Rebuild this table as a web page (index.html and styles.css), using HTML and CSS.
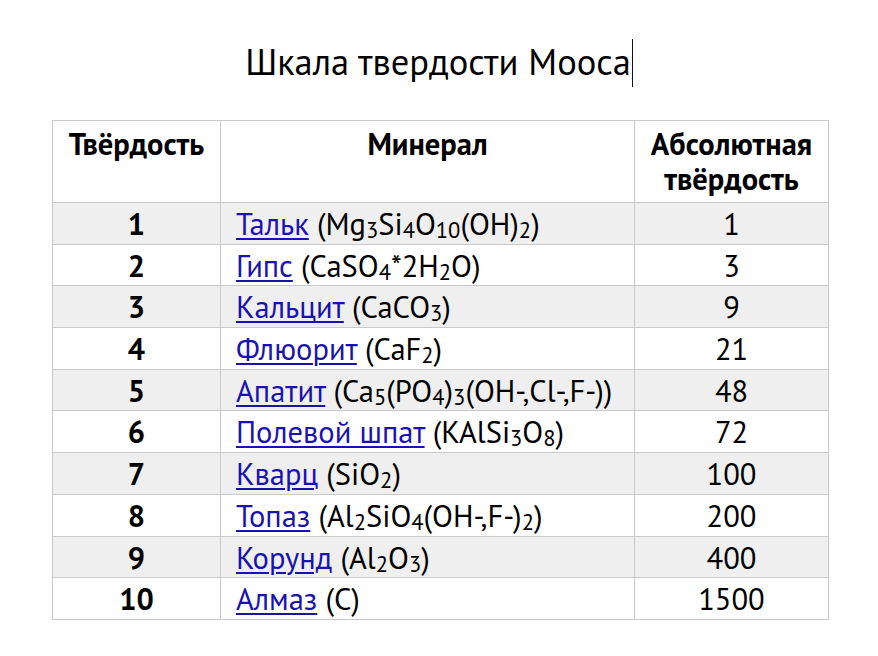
FILE: index.html
```html
<!DOCTYPE html>
<html lang="ru">
<head>
<meta charset="utf-8">
<title>Шкала твердости Мооса</title>
<link rel="stylesheet" href="styles.css">
</head>
<body>
<h1 class="title">Шкала твердости Мооса<span class="caret"></span></h1>
<table class="mohs">
  <colgroup>
    <col class="c1"><col class="c2"><col class="c3">
  </colgroup>
  <thead>
    <tr>
      <th>Твёрдость</th>
      <th>Минерал</th>
      <th>Абсолютная твёрдость</th>
    </tr>
  </thead>
  <tbody>
    <tr><th>1</th><td><a href="#">Тальк</a> (Mg<sub>3</sub>Si<sub>4</sub>O<sub>10</sub>(OH)<sub>2</sub>)</td><td>1</td></tr>
    <tr><th>2</th><td><a href="#">Гипс</a> (CaSO<sub>4</sub>*2H<sub>2</sub>O)</td><td>3</td></tr>
    <tr><th>3</th><td><a href="#">Кальцит</a> (CaCO<sub>3</sub>)</td><td>9</td></tr>
    <tr><th>4</th><td><a href="#">Флюорит</a> (CaF<sub>2</sub>)</td><td>21</td></tr>
    <tr><th>5</th><td><a href="#">Апатит</a> (Ca<sub>5</sub>(PO<sub>4</sub>)<sub>3</sub>(OH-,Cl-,F-))</td><td>48</td></tr>
    <tr><th>6</th><td><a href="#">Полевой шпат</a> (KAlSi<sub>3</sub>O<sub>8</sub>)</td><td>72</td></tr>
    <tr><th>7</th><td><a href="#">Кварц</a> (SiO<sub>2</sub>)</td><td>100</td></tr>
    <tr><th>8</th><td><a href="#">Топаз</a> (Al<sub>2</sub>SiO<sub>4</sub>(OH-,F-)<sub>2</sub>)</td><td>200</td></tr>
    <tr><th>9</th><td><a href="#">Корунд</a> (Al<sub>2</sub>O<sub>3</sub>)</td><td>400</td></tr>
    <tr><th>10</th><td><a href="#">Алмаз</a> (C)</td><td>1500</td></tr>
  </tbody>
</table>
</body>
</html>
```
FILE: styles.css
```css
html, body {
  margin: 0;
  background: #fff;
  color: #000;
  font-family: "PT Sans", "Noto Sans", sans-serif;
}

.title {
  margin: 0 0 37px;
  padding-top: 39px;
  height: 44px;
  line-height: 44px;
  font-size: 36.5px;
  font-weight: normal;
  text-align: center;
  white-space: nowrap;
}

.caret {
  display: inline-block;
  width: 1px;
  height: 48px;
  margin-left: 1px;
  background: #111;
  vertical-align: -12px;
}

.mohs {
  margin: 0 0 0 52px;
  width: 776px;
  border-collapse: collapse;
  table-layout: fixed;
  font-size: 30.5px;
  line-height: 35px;
}

.c1 { width: 168px; }
.c2 { width: 414px; }
.c3 { width: 194px; }

.mohs th,
.mohs td {
  border: 1px solid #c9c9c9;
  padding: 3px 15px 2.7px;
  height: 35px;
  text-align: center;
  vertical-align: middle;
}

.mohs thead th {
  font-weight: bold;
  vertical-align: top;
  padding: 5px 6px 6px;
  height: 70px;
}

.mohs tbody th {
  font-weight: bold;
}

.mohs tbody td:nth-child(2) {
  text-align: left;
  white-space: nowrap;
}

.mohs tbody tr:nth-child(odd) {
  background: #efefef;
}

.mohs a {
  color: #1a12b0;
  text-decoration: underline;
  text-decoration-thickness: 2px;
  text-underline-offset: 3px;
}

.mohs sub {
  font-size: 0.74em;
  vertical-align: -0.12em;
  line-height: 0;
}
```
